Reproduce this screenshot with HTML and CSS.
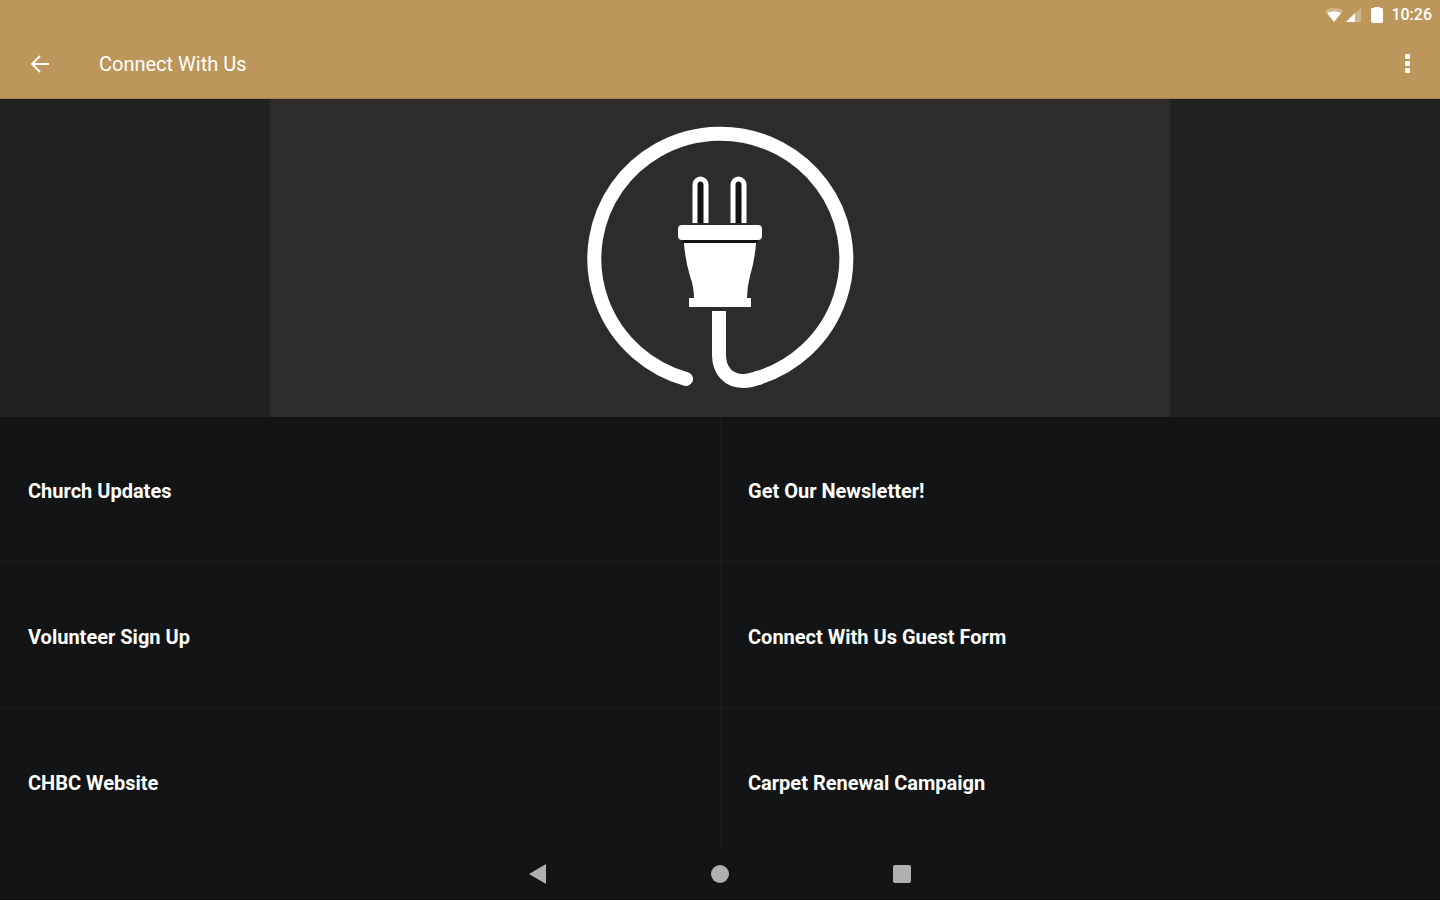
FILE: index.html
```html
<!DOCTYPE html>
<html lang="en">
<head>
    <meta charset="UTF-8">
    <meta name="viewport" content="width=device-width, initial-scale=1.0">
    <title>Connect With Us</title>
    <link rel="stylesheet" href="styles.css">
</head>
<body>
    <header>
        <div class="status-bar">
            <svg class="wifi" width="20" height="16" viewBox="0 0 20 16">
                <path d="M10 15 L1 4 C6 0 14 0 19 4 Z" fill="#fff" opacity="0.3"/>
                <path d="M10 15 L3 6 C7 4 13 4 17 6 Z" fill="#fff"/>
            </svg>
            <svg class="signal" width="16" height="16" viewBox="0 0 16 16">
                <path d="M0 15 L15 1 V15 Z" fill="#fff" opacity="0.3"/>
                <path d="M0 15 L9 6 V15 Z" fill="#fff"/>
            </svg>
            <svg class="battery" width="12" height="18" viewBox="0 0 12 18">
                <path d="M3 1 H9 V2 H11 Q12 2 12 4 V15 Q12 17 10 17 H2 Q0 17 0 15 V4 Q0 2 1 2 H3 Z" fill="#fff"/>
            </svg>
            <span class="time">10:26</span>
        </div>
        <div class="toolbar">
            <button class="icon-btn" type="button" aria-label="Back">
                <svg width="20" height="20" viewBox="0 0 20 20">
                    <path d="M19 10 H2 M10 2 L2 10 L10 18" fill="none" stroke="#fff" stroke-width="2"/>
                </svg>
            </button>
            <h1>Connect With Us</h1>
            <button class="icon-btn" type="button" aria-label="More options">
                <svg width="6" height="20" viewBox="0 0 6 20">
                    <rect x="1" y="0" width="5" height="5" rx="1" fill="#fff"/>
                    <rect x="1" y="7" width="5" height="5" rx="1" fill="#fff"/>
                    <rect x="1" y="14" width="5" height="5" rx="1" fill="#fff"/>
                </svg>
            </button>
        </div>
    </header>

    <div class="banner">
        <svg class="banner-art" viewBox="0 0 900 318">
            <g transform="translate(300 11)">
                <!-- cord -->
                <path d="M116 269 A126 125 0 1 1 188 268" fill="none" stroke="#fff" stroke-width="14" stroke-linecap="round"/>
                <path d="M190 267 C183 270 178 271 173 271 C159 271 149 261 149 245 V201" fill="none" stroke="#fff" stroke-width="14"/>
                <!-- prongs -->
                <path d="M125 113 V75 A5.5 6 0 0 1 136 75 V113" fill="#151413" stroke="#fff" stroke-width="5"/>
                <path d="M163 113 V75 A5.5 6 0 0 1 174 75 V113" fill="#151413" stroke="#fff" stroke-width="5"/>
                <!-- plug body -->
                <rect x="108" y="115" width="84" height="15" rx="4" fill="#fff"/>
                <rect x="112" y="130" width="76" height="3" fill="#151413"/>
                <path d="M114 133 H186 Q185 149 180 166 Q177 177 177 188 H181 V197 H119 V188 H124 Q124 177 120 166 Q115 149 114 133 Z" fill="#fff"/>
            </g>
        </svg>
    </div>

    <main class="links">
        <a href="#">Church Updates</a>
        <a href="#">Get Our Newsletter!</a>
        <a href="#">Volunteer Sign Up</a>
        <a href="#">Connect With Us Guest Form</a>
        <a href="#">CHBC Website</a>
        <a href="#">Carpet Renewal Campaign</a>
    </main>

    <nav class="system-nav">
        <button type="button" aria-label="Back">
            <svg width="20" height="20" viewBox="0 0 20 20">
                <path d="M1 10 L18 0 V20 Z" fill="#b0b0b0"/>
            </svg>
        </button>
        <button type="button" aria-label="Home">
            <svg width="20" height="20" viewBox="0 0 20 20">
                <circle cx="10" cy="10" r="9" fill="#b0b0b0"/>
            </svg>
        </button>
        <button type="button" aria-label="Recent apps">
            <svg width="20" height="20" viewBox="0 0 20 20">
                <rect x="1" y="1" width="18" height="18" rx="2" fill="#b0b0b0"/>
            </svg>
        </button>
    </nav>
</body>
</html>
```

FILE: styles.css
```css
* {
    margin: 0;
    padding: 0;
    box-sizing: border-box;
}

body {
    display: flex;
    flex-direction: column;
    min-height: 100vh;
    background: #121416;
    color: #fff;
    font-family: Roboto, "Liberation Sans", sans-serif;
}

button {
    background: none;
    border: none;
    cursor: pointer;
}

svg {
    display: block;
}

header {
    background: #bc965a;
}

.status-bar {
    display: flex;
    justify-content: flex-end;
    align-items: center;
    height: 29px;
    padding-right: 8px;
}

.signal {
    margin-left: 2px;
}

.battery {
    margin-left: 9px;
}

.time {
    margin-left: 8px;
    font-size: 16px;
    font-weight: 500;
    line-height: 30px;
}

.toolbar {
    display: flex;
    align-items: center;
    height: 70px;
    padding: 0 20px;
    border-bottom: 1px solid #a58047;
}

.toolbar h1 {
    flex: 1;
    margin-left: 39px;
    font-size: 20px;
    font-weight: 400;
}

.icon-btn {
    padding: 10px;
}

.banner {
    background: #222;
}

.banner-art {
    width: 62.5%;
    margin: 0 auto;
    background: #2e2c2a;
}

.links {
    flex: 1;
    display: grid;
    grid-template-columns: 1fr 1fr;
    grid-auto-rows: 146px;
}

.links a {
    display: flex;
    align-items: center;
    padding: 4px 28px 0;
    border-bottom: 3px solid #17191b;
    color: #fff;
    font-size: 20px;
    font-weight: 700;
    text-decoration: none;
}

.links a:nth-child(even) {
    padding-left: 26px;
    border-left: 2px solid #191b1d;
}

.links a:nth-last-child(-n+2) {
    border-bottom-color: transparent;
}

.system-nav {
    position: fixed;
    left: 0;
    right: 0;
    bottom: 0;
    display: flex;
    justify-content: center;
    gap: 142px;
    height: 52px;
    background: #121416;
    border-bottom: 1px solid #08090a;
}

.system-nav button {
    padding: 0 10px;
}
```
